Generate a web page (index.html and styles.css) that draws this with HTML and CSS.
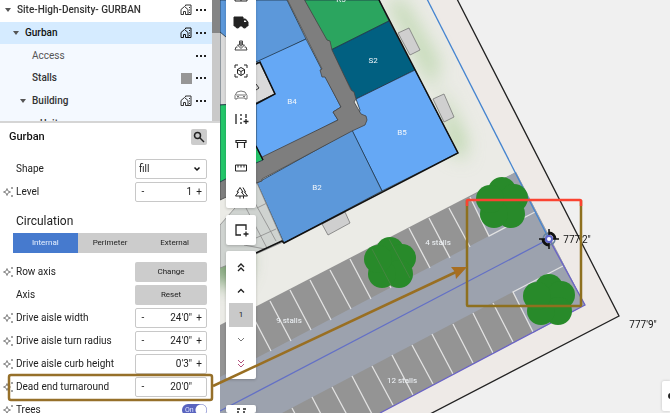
FILE: index.html
```html
<!DOCTYPE html>
<html lang="en">
<head>
<meta charset="utf-8">
<title>Site editor</title>
<link rel="stylesheet" href="styles.css">
</head>
<body>
<svg class="canvas" viewBox="0 0 670 413" preserveAspectRatio="xMinYMin slice" aria-label="Site plan">
  <defs>
    <filter id="soft" x="-50%" y="-50%" width="200%" height="200%"><feGaussianBlur stdDeviation="9"/></filter>
    <g id="tree">
      <circle r="21"/><circle cx="0" cy="-12" r="14"/><circle cx="12" cy="-5" r="14"/><circle cx="9" cy="11" r="14"/><circle cx="-8" cy="11" r="14"/><circle cx="-12" cy="-4" r="14"/>
    </g>
    <clipPath id="lot"><path d="M220 0H457L619 316 432 413H220Z"/></clipPath>
  </defs>
  <rect width="670" height="413" fill="#f0f0f0"/>
  <path d="M220 0H457L619 316 432 413H220Z" fill="#eeeae7"/>
  <path d="M220 0H428L516 172 220 325Z" fill="#ebebe6"/>
  <g clip-path="url(#lot)" filter="url(#soft)" fill="#b9d6a9">
    <path d="M386 0L404 0 440 62 432 90 410 45Z" opacity=".8"/>
    <path d="M440 85L466 140 464 160 450 150Z"/>
    <ellipse cx="228" cy="262" rx="20" ry="24" fill="#7fa377"/>
  </g>
  <path d="M457 -1L619 316 430 414" fill="none" stroke="#222" stroke-width="1.3"/>

  <path d="M220 325L516 172 585 305 380 413H220Z" fill="#949494"/>
  <path d="M220 377L489 236 470 197 516 172 585 305 533 333 513 292 282 413H220Z" fill="#9ca2ae"/>
  <g stroke="#e2e2e2" stroke-width="1.3" fill="none">
    <path d="M230 322l21 40M250 311l21 40M270 301l21 40M290 290l21 40M310 280l21 40M330 270l21 39M350 259l21 40M370 249l21 39M389 239l21 39M409 228l21 40M429 218l21 40M449 208l21 39M470 197l19 39L535 212"/>
    <path d="M292 408l21 40M312 397l21 40M332 387l21 39M352 376l21 40M372 366l21 39M392 355l21 40M412 345l21 39M432 334l21 40M453 324l20 39M473 313l20 40M493 303l20 39M533 332L513 292 563 266"/>
  </g>
  <path d="M220 411L549 239" stroke="#6370c6" stroke-width="1.3"/>
  <path d="M427 -1L549 239" stroke="#4584d0" stroke-width="1.3"/>
  <path d="M549 239L585 305 380 413" fill="none" stroke="#6a63c6" stroke-width="1.3"/>

  <g stroke="#1f3445" stroke-width=".8">
    <path d="M220 0H287L306 39 256 64 220 80Z" fill="#5c98da"/>
    <path d="M256 62L306 39 341 107 333 112 338 120 256 162Z" fill="#65a8f5"/>
    <path d="M304 0H379L389 21 331 50Z" fill="#2ba55f"/>
    <path d="M389 21L415 70 356 99 331 50Z" fill="#016081"/>
    <path d="M415 70L458 153 382 191 352 131 360 110 356 99Z" fill="#65a8f5"/>
    <path d="M352 130L382 191 284 243 257 183Z" fill="#5c98da"/>
    <path d="M287 -1H304L327 40 330 41 332 50 351 90 354 92 356 99 354 102 361 114 366 116 367 120 365 125 352 131 262 179 262 181 256 183 220 200V176L256 160 338 120 333 112 341 107 325 77 322 77 320 70 322 69Z" fill="#7e7e7e" stroke="#444"/>
    <path d="M256 62L260 63 275 94 256 103 220 105V32Z" fill="#dadada"/>
    <path d="M220 105L235 104 263 160 256 163 220 182Z" fill="#24c66a"/>
    <path d="M398 33l11-5 11 22-10 5zM433 99l11-5 10 23-10 5zM322 224l23-12 5 11-22 12z" fill="#cfcfcf" stroke="#777"/>
    <path d="M242 200L257 183 283 242 256 254 220 268V225Z" fill="#cfd3d0" stroke="#888"/>
    <path d="M246 208l21 40M255 203l21 38M256 238l20-9M257 208l10-5M244 245l21 4" fill="none" stroke="#8a8a8a"/>
  </g>
  <path d="M379 0L458 153 284 243 282 241 256 253M254 65L260 62 275 94 256 104M256 146L263 160" fill="none" stroke="#111" stroke-width="1.5"/>
  <path d="M256 84l3 4-3 2" fill="none" stroke="#333"/>

  <g fill="#288a2a" stroke="none">
    <use href="#tree" x="502" y="203"/><use href="#tree" x="549" y="300"/><use href="#tree" x="390" y="263"/>
  </g>
  <g fill="none" stroke="#458640" stroke-width="1"><path d="M372 249l19 36M389 239l21 39"/></g>

  <g class="unit-label">
    <text x="341" y="2">R5</text><text x="373" y="63">S2</text><text x="292" y="104">B4</text>
    <text x="402" y="135">B5</text><text x="317" y="190">B2</text>
    <text x="438" y="245">4 stalls</text><text x="289" y="323">9 stalls</text><text x="402" y="383">12 stalls</text>
  </g>
  <g class="elevation"><text x="577" y="243">777'2"</text><text x="643" y="328">777'9"</text></g>
  <g fill="none" stroke="#111">
    <circle cx="549" cy="239" r="6" stroke="#66809c" stroke-width="1.5"/>
    <path d="M549 233a6 6 0 0 1 6 6M549 245a6 6 0 0 1-6-6" stroke-width="3"/>
    <path d="M549 229v6M549 243v6M539 239h6M553 239h6" stroke-width="1.5"/>
    <circle cx="549" cy="239" r="3" fill="#fff" stroke="#6267cb" stroke-width="2"/>
  </g>
</svg>

<div class="app">
  <aside class="sidebar">
    <div class="outline">
      <ul class="layers">
        <li class="layer"><span class="caret"></span><b>Site-High-Density- GURBAN</b><svg class="site-icon"><use href="#house"/></svg><button class="more" aria-label="More"><i></i><i></i><i></i></button></li>
        <li class="layer layer-1 selected"><span class="caret"></span><b>Gurban</b><svg class="site-icon"><use href="#house"/></svg><button class="more" aria-label="More"><i></i><i></i><i></i></button></li>
        <li class="layer layer-2 nested"><span class="name">Access</span><button class="more" aria-label="More"><i></i><i></i><i></i></button></li>
        <li class="layer layer-2 nested"><b>Stalls</b><span class="swatch"></span><button class="more" aria-label="More"><i></i><i></i><i></i></button></li>
        <li class="layer layer-3 nested"><span class="caret"></span><b>Building</b><svg class="site-icon"><use href="#house"/></svg><button class="more" aria-label="More"><i></i><i></i><i></i></button></li>
        <li class="layer layer-4 nested"><b>Units</b></li>
      </ul>
      <div class="scrollbar"><div class="thumb"></div></div>
    </div>

    <form class="properties">
      <header class="heading"><h1>Gurban</h1>
        <button type="button" class="search" aria-label="Search"><svg viewBox="0 0 16 16"><circle cx="6.5" cy="6.5" r="3"/><path d="M9 9l4 4"/></svg></button>
      </header>
      <div class="row"><label for="shape">Shape</label><div class="control select"><select id="shape"><option>fill</option></select><svg viewBox="0 0 8 8"><path d="M1.500 2.500l2.500 2.500 2.500-2.500"/></svg></div></div>
      <div class="row"><svg class="spark"><use href="#sparkle"/></svg><label for="level">Level</label><div class="control"><button type="button">-</button><input id="level" value="1"><button type="button">+</button></div></div>
      <h2>Circulation</h2>
      <div class="tabs"><button type="button" class="active">Internal</button><button type="button">Perimeter</button><button type="button">External</button></div>
      <div class="row"><svg class="spark"><use href="#sparkle"/></svg><span class="label">Row axis</span><button type="button" class="action">Change</button></div>
      <div class="row"><span class="label">Axis</span><button type="button" class="action">Reset</button></div>
      <div class="row"><svg class="spark"><use href="#sparkle"/></svg><label for="width">Drive aisle width</label><div class="control"><button type="button">-</button><input id="width" value="24'0&quot;"><button type="button">+</button></div></div>
      <div class="row"><svg class="spark"><use href="#sparkle"/></svg><label for="radius">Drive aisle turn radius</label><div class="control"><button type="button">-</button><input id="radius" value="24'0&quot;"><button type="button">+</button></div></div>
      <div class="row"><svg class="spark"><use href="#sparkle"/></svg><label for="curb">Drive aisle curb height</label><div class="control"><span class="blank"></span><input id="curb" value="0'3&quot;"><button type="button">+</button></div></div>
      <div class="row"><svg class="spark"><use href="#sparkle"/></svg><label for="turn">Dead end turnaround</label><div class="control"><button type="button">-</button><input id="turn" value="20'0&quot;"><span class="blank"></span></div></div>
      <div class="row"><svg class="spark"><use href="#sparkle"/></svg><label for="trees">Trees</label><span class="toggle"><input type="checkbox" id="trees" checked><span>On</span></span></div>
    </form>
  </aside>

  <nav class="tools" aria-label="Tools">
    <div class="toolbox main-tools">
      <button aria-label="Building"><svg viewBox="0 0 18 18"><path d="M3 13V7h12v6zM9 7v6M9 10h6"/></svg></button>
      <button aria-label="Truck"><svg viewBox="0 0 18 18"><path class="solid" d="M2 4h9v2h2.500L16 9v4h-1.500a2 2 0 0 1-4 0H7.500a2 2 0 0 1-4 0H2z"/><path d="M12 7.500h1.500l1 1.500H12z" fill="#fff" stroke="none"/></svg></button>
      <button aria-label="Import"><svg viewBox="0 0 18 18"><path d="M7.500 4h3v4h2L9 11.500 5.500 8h2zM5.500 10H4l-1 3h12l-1-3h-1.500" stroke="#444"/><path d="M8 4.500h2v5H8z" fill="#777" stroke="none"/></svg></button>
      <button aria-label="Model"><svg viewBox="0 0 18 18"><path d="M3 6V3h3M12 3h3v3M15 12v3h-3M6 15H3v-3M9 5.500l3.500 2v4L9 13.500l-3.500-2v-4zM5.500 7.500L9 9.500l3.500-2M9 9.500v4"/></svg></button>
      <button aria-label="Car" class="muted"><svg viewBox="0 0 18 18"><path d="M3 13V9.500l2-3.500q4-2 8 0l2 3.500V13h-2v-1H5v1zM4 9h10M5 10.500h2M11 10.500h2"/></svg></button>
      <button aria-label="Parking"><svg viewBox="0 0 18 18"><path d="M4 4v10M9 4v2M9 8v2M9 12v2M14 4v4M14 9v5M11.500 11.500h5" stroke-width="1.300"/></svg></button>
      <button aria-label="Bench"><svg viewBox="0 0 18 18"><path d="M4 5.500h10v2H4zM5.500 8v5M12.500 8v5" stroke-width="1.200"/></svg></button>
      <button aria-label="Measure"><svg viewBox="0 0 18 18"><path d="M3.500 6h11v6h-11zM6 6v2.500M9 6v2.500M12 6v2.500"/></svg></button>
      <button aria-label="Landscape"><svg viewBox="0 0 18 18"><path d="M8 3.500L5 8h1.500L3.500 12H8v2.500M8 3.500L11 8H9.500l3 4H8M11 3.500L13.500 8h-1l3 4h-3M11.500 12v2.500"/></svg></button>
    </div>
    <div class="toolbox add-tool">
      <button aria-label="Add area"><svg viewBox="0 0 18 18"><path d="M14 9V4H4v10h5M11.500 13h5M14 10.500v5" stroke-width="1.300"/></svg></button>
    </div>
    <div class="toolbox levels">
      <button aria-label="Top level"><svg viewBox="0 0 18 18"><path d="M6 9l3-3 3 3M6 13l3-3 3 3" stroke-width="1.400"/></svg></button>
      <button aria-label="Level up"><svg viewBox="0 0 18 18"><path d="M6 10.500l3-3 3 3" stroke-width="1.400"/></svg></button>
      <button class="current">1</button>
      <button aria-label="Level down" class="muted"><svg viewBox="0 0 18 18"><path d="M6 8l3 3 3-3"/></svg></button>
      <button aria-label="Bottom level" class="rose"><svg viewBox="0 0 18 18"><path d="M6 6l3 3 3-3M6 10l3 3 3-3"/></svg></button>
    </div>
    <div class="toolbox last-tool">
      <button aria-label="View"><svg viewBox="0 0 18 18"><path d="M5 4h3M11 4h3M6 6v5M12 6v5" stroke-width="1.500"/></svg></button>
    </div>
  </nav>
  <div class="corner"><button aria-label="Options"></button></div>
</div>

<svg class="markup" viewBox="0 0 670 413" preserveAspectRatio="xMinYMin slice" aria-hidden="true">
  <defs>
    <g id="house" fill="none" stroke="currentColor" stroke-width="1"><path d="M1 10.500V5.500L4.500 2.500 8 5.500v5H5.500V7.500h-2v3zM5.500 2V1H11v9.500H8M9.500 3v1M9.500 5.500v1M9.500 8v1"/></g>
    <g id="sparkle" fill="none" stroke="#858585" stroke-width="1"><path d="M4 2.500L5 5 7.500 6 5 7 4 9.500 3 7 .5 6 3 5z"/><path d="M8 2h2M9 1v2M8 10h2M9 9v2"/></g>
  </defs>
  <g fill="none" stroke="#96702a" stroke-width="2.500">
    <rect x="9" y="375" width="203" height="25" rx="2"/>
    <path d="M213 386L456 272" stroke="#996f22"/>
    <path d="M467 200V305Q467 306 468 306H580Q581 306 581 305V200" stroke="#8e701f"/>
    <path d="M467 206V201Q467 200 468 200H580Q581 200 581 201V206" stroke="#fb4331"/>
  </g>
  <path d="M467 267L451 267 455 272 456 279Z" fill="#a86e20"/>
</svg>
</body>
</html>
```
FILE: styles.css
```css
* { box-sizing: border-box; }
body {
  margin: 0;
  height: 100vh;
  overflow: hidden;
  background: #f0f0f0;
  color: #222;
  font: 10px/14px Roboto, sans-serif;
}
button, input, select { font: inherit; color: inherit; }
button { border: 0; padding: 0; background: none; }
h1, h2, ul { margin: 0; padding: 0; }
b { font-weight: 500; }

.canvas, .markup { position: absolute; top: 0; left: 0; width: 100%; height: 100%; }
.markup { pointer-events: none; }
.unit-label { font-size: 8px; fill: #f2f6fa; text-anchor: middle; }
.elevation { font-size: 10px; fill: #111; text-anchor: middle; }

.app { position: relative; display: flex; height: 100%; overflow: hidden; }
.sidebar { flex: 0 0 220px; background: #fff; overflow: hidden; }

.outline { display: flex; height: 123px; overflow: hidden; border-bottom: 2px solid #d5d5d5; }
.layers { flex: 1; display: grid; grid-auto-rows: 1fr; height: 136px; margin-top: -1px; list-style: none; }
.layer { display: flex; align-items: center; gap: 4px; padding: 0 6px 0 5px; color: #333; }
.layer b, .name { flex: 1; white-space: nowrap; }
.name { color: #555; }
.nested { background: #f4f9ff; }
.selected { background: #d5ebff; color: #111; }
.layer-1 { padding-left: 13px; }
.layer-2 { padding-left: 32px; }
.layer-3 { padding-left: 20px; }
.layer-4 { padding-left: 40px; }
.caret { width: 6px; height: 4px; margin-right: 2px; border: solid transparent; border-width: 4px 3px 0; border-top-color: #555; }
.site-icon { width: 12px; height: 12px; }
.swatch { width: 11px; height: 11px; background: #969696; }
.more { display: flex; gap: 2px; width: 10px; }
.more i { width: 2px; height: 2px; background: #222; }
.scrollbar { width: 8px; background: #c9c9c9; }
.thumb { height: 33px; background: #858585; }

.properties { padding: 4px 13px 0 9px; }
.heading { display: flex; align-items: center; justify-content: space-between; height: 20px; margin-bottom: 10px; }
h1 { font-size: 11px; font-weight: 500; color: #111; }
.search { width: 16px; height: 16px; border-radius: 2px; background: #ccc; }
.search svg { display: block; fill: none; stroke: #222; stroke-width: 1.500; }
.row { position: relative; display: flex; align-items: center; height: 23px; padding-left: 7px; }
.row label, .label { flex: 1; white-space: nowrap; }
.spark { position: absolute; left: -6px; width: 12px; height: 12px; }
.control, .action { width: 72px; height: 20px; border-radius: 2px; }
.control { display: flex; align-items: center; border: 1px solid #c8c8c8; background: #fff; }
.control button, .blank { flex: 0 0 14px; }
.control input { flex: 1; width: 0; min-width: 0; padding: 0; border: 0; background: none; text-align: right; }
.select { position: relative; }
.select select { width: 100%; height: 18px; padding: 0 3px; border: 0; background: none; appearance: none; }
.select svg { position: absolute; right: 5px; width: 8px; height: 8px; fill: none; stroke: #111; stroke-width: 1.500; }
.action { background: #ccc; font-size: 8px; }
h2 { padding: 11px 0 5px 7px; font-size: 12px; line-height: 14px; font-weight: 400; }
.tabs { display: grid; grid-template-columns: repeat(3, 1fr); height: 20px; margin: 0 0 7px 4px; background: #ccc; font-size: 8px; }
.tabs .active { background: #467ace; color: #e6f0ff; }
.toggle { position: relative; width: 25px; height: 12px; color: #dfe4ff; font-size: 7px; line-height: 12px; }
.toggle input { appearance: none; display: block; width: 25px; height: 12px; margin: 0; border-radius: 6px; background: radial-gradient(circle at 19px 6px, #fff 5px, #5964bf 6px); }
.toggle span { position: absolute; left: 3px; top: 0; }

.tools { display: flex; flex-direction: column; width: 30px; margin-left: 6px; }
.toolbox { display: grid; flex: none; background: #fff; border-radius: 2px; box-shadow: 0 1px 3px #0003; }
.toolbox button { display: grid; place-items: center; }
.toolbox svg { width: 18px; height: 18px; fill: none; stroke: #222; stroke-width: 1; }
.toolbox .solid { fill: #222; }
.toolbox .muted svg { stroke: #777; }
.toolbox .rose svg { stroke: #b3527d; }
.main-tools { grid-auto-rows: 1fr; height: 223px; margin-top: -15px; padding-bottom: 3px; }
.add-tool { height: 30px; margin-top: 7px; }
.levels { grid-auto-rows: 24px; margin-top: 6px; padding: 4px 3px; }
.levels .current { background: #c9c9c9; font-size: 8px; }
.last-tool { flex: 1; min-height: 8px; margin-top: 26px; overflow: hidden; }
.last-tool button { height: 18px; }
.corner { position: absolute; right: 0; bottom: 2px; width: 8px; height: 30px; background: #fff; border-radius: 2px 0 0 2px; box-shadow: 0 0 3px #0003; overflow: hidden; }
.corner button { display: block; width: 6px; height: 6px; margin: 12px 0 0 6px; border-radius: 3px; background: #222; }
```
